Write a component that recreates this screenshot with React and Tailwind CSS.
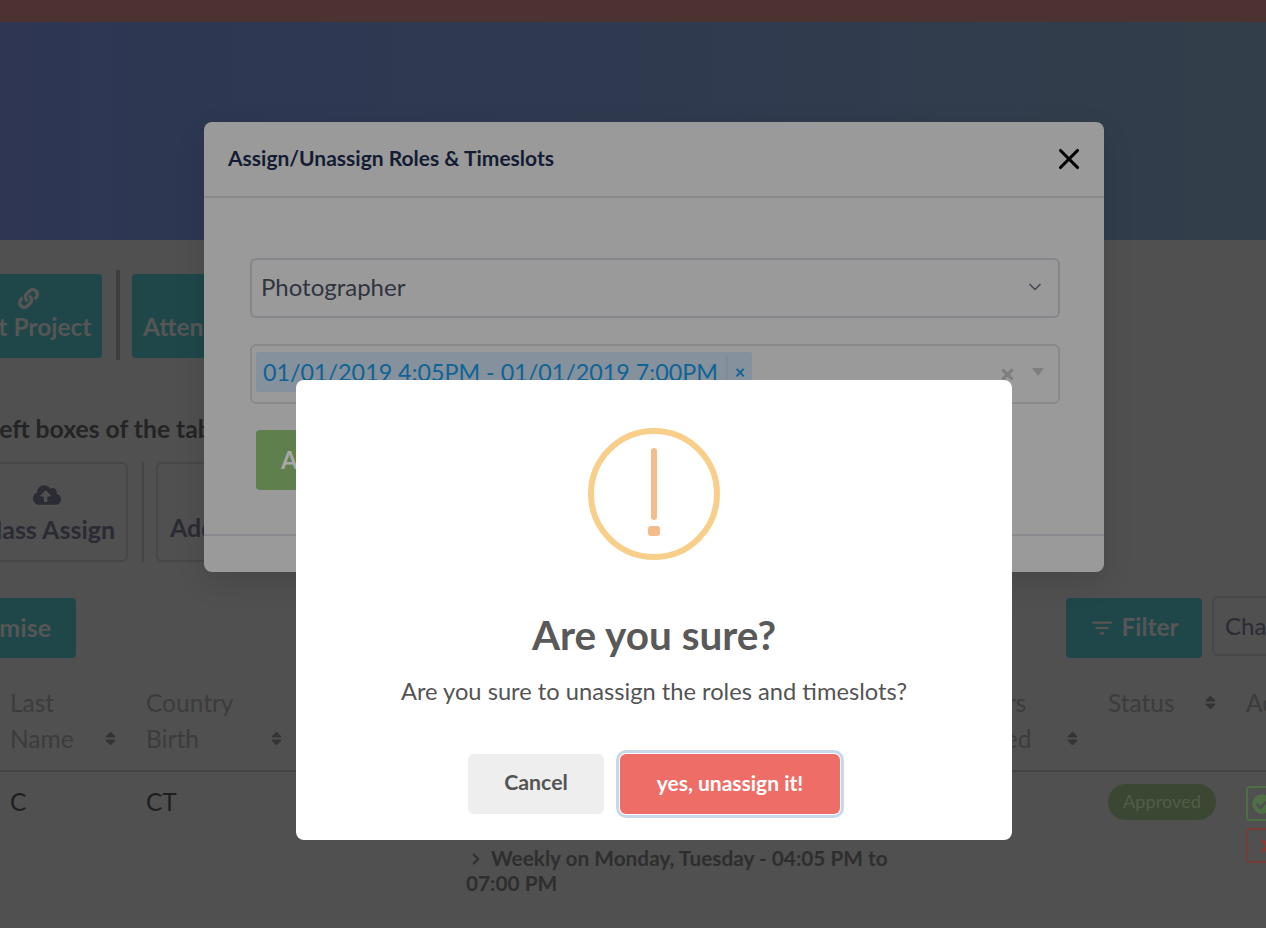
import React from 'react';
import { ChevronDown, ChevronRight, X } from 'lucide-react';
import { FaLink, FaCloudUploadAlt, FaSort, FaCheckCircle, FaTimes } from 'react-icons/fa';
import { MdFilterList } from 'react-icons/md';

function SortIcon() {
  return <FaSort className="h-[17px] w-[17px] shrink-0 text-[#343434]" />;
}

function HeaderCell({ lines, className, iconClass }) {
  return (
    <div className={`relative shrink-0 text-[24.5px] leading-[36px] text-[#3c3c3c] ${className}`}>
      {lines.map((line) => (
        <div key={line}>{line}</div>
      ))}
      <span className={`absolute ${iconClass}`}>
        <SortIcon />
      </span>
    </div>
  );
}

// page behind the two dialogs, colours are the dimmed ones
function BackgroundPage() {
  return (
    <div className="flex h-[928px] w-[1266px] flex-col overflow-hidden bg-[#505050]">
      <div className="h-[22px] shrink-0 bg-[#4c3331]" />
      <div className="h-[218px] shrink-0 bg-gradient-to-r from-[#2e3653] via-[#2f3a50] to-[#333e4a]" />

      <div className="mt-[30px] ml-[-46px] flex h-[90px] items-center">
        <div className="mt-[2px] flex h-[84px] w-[148px] shrink-0 flex-col items-center justify-center rounded bg-[#1f474a] pb-[2px] text-[#565656]">
          <FaLink className="h-[21px] w-[21px]" />
          <span className="mt-[2px] whitespace-nowrap text-[24.5px] leading-[32px] font-bold">Edit Project</span>
        </div>
        <div className="mr-[12px] ml-[14px] h-[90px] w-[4px] shrink-0 bg-[#3e3e3e]" />
        <div className="mt-[2px] flex h-[84px] w-[200px] shrink-0 items-end justify-start rounded bg-[#1f474a] pb-[15px] pl-[11px] text-[#565656]">
          <span className="text-[24.5px] leading-[32px] font-bold">Attendance</span>
        </div>
      </div>

      <div className="mt-[53px] mb-[1px] ml-[-7px] whitespace-nowrap text-[24.7px] leading-[32px] font-bold text-[#242424]">
        left boxes of the table
      </div>

      <div className="mt-[16px] ml-[-34px] flex h-[100px] items-center">
        <div className="flex h-[100px] w-[162px] shrink-0 flex-col items-center justify-center rounded-md border-2 border-[#474747] pt-[3px] text-[#2b2b33]">
          <FaCloudUploadAlt className="h-[28px] w-[28px]" />
          <span className="mt-[2px] whitespace-nowrap text-[25px] leading-[36px] font-bold">Mass Assign</span>
        </div>
        <div className="mr-[12px] ml-[14px] h-[100px] w-[2px] shrink-0 bg-[#454545]" />
        <div className="flex h-[100px] w-[200px] shrink-0 items-end rounded-md border-2 border-[#474747] pb-[15px] pl-[12px] text-[#2b2b33]">
          <span className="text-[25px] leading-[36px] font-bold">Add</span>
        </div>
      </div>

      <div className="mt-[36px] flex h-[62px] items-start">
        <div className="ml-[-60px] flex h-[60px] w-[136px] items-center justify-end rounded bg-[#1f474a] pr-[25px] pb-[1px] text-[25px] font-bold text-[#565656]">
          Promise
        </div>
        <div className="ml-auto flex h-[60px] w-[136px] items-center justify-center gap-[6px] rounded bg-[#1f474a] pb-[1px] text-[24.4px] font-bold text-[#565656]">
          <MdFilterList className="h-[26px] w-[26px]" />
          Filter
        </div>
        <div className="mt-[-2px] mr-[-66px] ml-[10px] flex h-[60px] w-[120px] shrink-0 items-center rounded-md border-2 border-[#474747] pl-[11px] text-[24px] text-[#2b2b33]">
          Change
        </div>
      </div>

      <div className="mt-[23px] flex h-[89px] shrink-0 border-b-2 border-[#434343] pt-[2px] pl-[10px]">
        <HeaderCell lines={['Last', 'Name']} className="w-[136px]" iconClass="left-[92px] top-[45px]" />
        <HeaderCell lines={['Country', 'Birth']} className="w-[320px]" iconClass="left-[122px] top-[45px]" />
        <div className="w-[495px] shrink-0" />
        <HeaderCell lines={['Hours', 'Added']} className="w-[147px]" iconClass="left-[103px] top-[45px]" />
        <HeaderCell lines={['Status']} className="w-[138px]" iconClass="left-[94px] top-[9px]" />
        <div className="whitespace-nowrap text-[24.5px] leading-[36px] text-[#3c3c3c]">Action</div>
      </div>

      <div className="flex pt-[12px] pl-[10px]">
        <div className="w-[136px] shrink-0 text-[24.5px] leading-[36px] text-[#1f1f1f]">C</div>
        <div className="w-[320px] shrink-0 text-[24.5px] leading-[36px] text-[#1f1f1f]">CT</div>
        <div className="w-[642px] shrink-0 pt-[61px]">
          <div className="w-[430px] text-[20.8px] leading-[25px] font-bold text-[#2e2e2e]">
            <ChevronRight className="mr-[6px] ml-[1px] inline h-[18px] w-[18px] align-[-2px]" strokeWidth={2.5} />
            Weekly on Monday, Tuesday - 04:05 PM to 07:00 PM
          </div>
        </div>
        <div className="w-[138px] shrink-0">
          <div className="flex h-[36px] w-[108px] items-center justify-center rounded-full bg-[#3b4733] pb-[1px] text-[18.2px] text-[#4f5e47]">
            Approved
          </div>
        </div>
        <div className="flex shrink-0 flex-col gap-[7px] pt-[2px]">
          <div className="flex h-[35px] w-[40px] items-center rounded-sm border-2 border-[#4f6f45] pl-[4px] text-[#4f6f45]">
            <FaCheckCircle className="h-[20px] w-[20px] shrink-0" />
          </div>
          <div className="flex h-[35px] w-[40px] items-center rounded-sm border-2 border-[#793b37] pl-[10px] text-[#8a3a35]">
            <FaTimes className="h-[20px] w-[20px] shrink-0" />
          </div>
        </div>
      </div>
    </div>
  );
}

function AssignModal() {
  return (
    <div className="absolute top-[122px] left-[204px] flex h-[450px] w-[900px] flex-col rounded-lg bg-[#9a9a9a] shadow-[0_10px_30px_rgba(0,0,0,0.12)]">
      <div className="flex h-[76px] shrink-0 items-center justify-between border-b-2 border-[#8b8b8f] pr-[18px] pl-[24px]">
        <h2 className="mt-[-2px] text-[21px] font-bold text-[#141c33]">Assign/Unassign Roles &amp; Timeslots</h2>
        <X className="h-[34px] w-[34px] text-black" strokeWidth={2.2} />
      </div>
      <div className="flex-1 pt-[60px] pr-[44px] pl-[46px]">
        <div className="flex h-[60px] items-center justify-between rounded-md border-2 border-[#85858c] pr-[13px] pb-[2px] pl-[9px] text-[24px] text-[#30343f]">
          Photographer
          <ChevronDown className="h-[20px] w-[20px] text-[#474a58]" />
        </div>
        <div className="mt-[26px] flex h-[60px] items-center rounded-md border-2 border-[#8a8a8c] pr-[14px] pl-[4px]">
          <div className="mb-[4px] flex h-[40px] items-center rounded-[3px] bg-[#85919c] pr-[7px] text-[23.3px] whitespace-nowrap text-[#0f6396]">
            <span className="border-r-2 border-[#7d8c99] pr-[8px] pl-[7px]">01/01/2019 4:05PM - 01/01/2019 7:00PM</span>
            <span className="pl-[7px] text-[18px] font-bold">×</span>
          </div>
          <FaTimes className="ml-auto h-[17px] w-[17px] text-[#7f7f7f]" />
          <div className="mb-[4px] ml-[16px] h-0 w-0 border-x-[6px] border-t-[8px] border-x-transparent border-t-[#7f7f7f]" />
        </div>
        <div className="mt-[26px] ml-[6px] flex h-[60px] w-[180px] items-center rounded bg-[#5f7f4d] pl-[25px] text-[24px] font-bold text-[#a8a8a8]">
          Assign
        </div>
      </div>
      <div className="h-[38px] shrink-0 border-t-2 border-[#8b8b8f]" />
    </div>
  );
}

function ConfirmDialog() {
  return (
    <div className="absolute top-[380px] left-[296px] flex h-[460px] w-[716px] flex-col items-center rounded-lg bg-white pt-[48px]">
      <div className="flex h-[132px] w-[132px] flex-col items-center rounded-full border-[6px] border-[#f8cf8a] pt-[14px]">
        <div className="h-[72px] w-[6px] rounded-full bg-[#f5bc8b]" />
        <div className="mt-[6px] h-[10px] w-[12px] rounded-[3px] bg-[#f5bc8b]" />
      </div>
      <h1 className="mt-[47px] text-[40.5px] leading-[56px] font-bold text-[#595959]">Are you sure?</h1>
      <p className="mt-[12px] text-[23.7px] leading-[32px] text-[#545454]">Are you sure to unassign the roles and timeslots?</p>
      <div className="mt-[47px] flex gap-[16px]">
        <button className="h-[60px] w-[136px] rounded-md bg-[#eeeeee] pb-[2px] text-[21.3px] font-bold text-[#545454]">Cancel</button>
        <button className="h-[60px] w-[220px] rounded-md bg-[#ee6e67] pb-[3px] text-[21px] font-bold text-white shadow-[0_0_0_1px_#ffffff,0_0_0_4px_#c6d9e8]">
          yes, unassign it!
        </button>
      </div>
    </div>
  );
}

export default function App() {
  return (
    <div className="relative h-[928px] w-[1266px] overflow-hidden font-['Lato',sans-serif]">
      <BackgroundPage />
      <AssignModal />
      <ConfirmDialog />
    </div>
  );
}
